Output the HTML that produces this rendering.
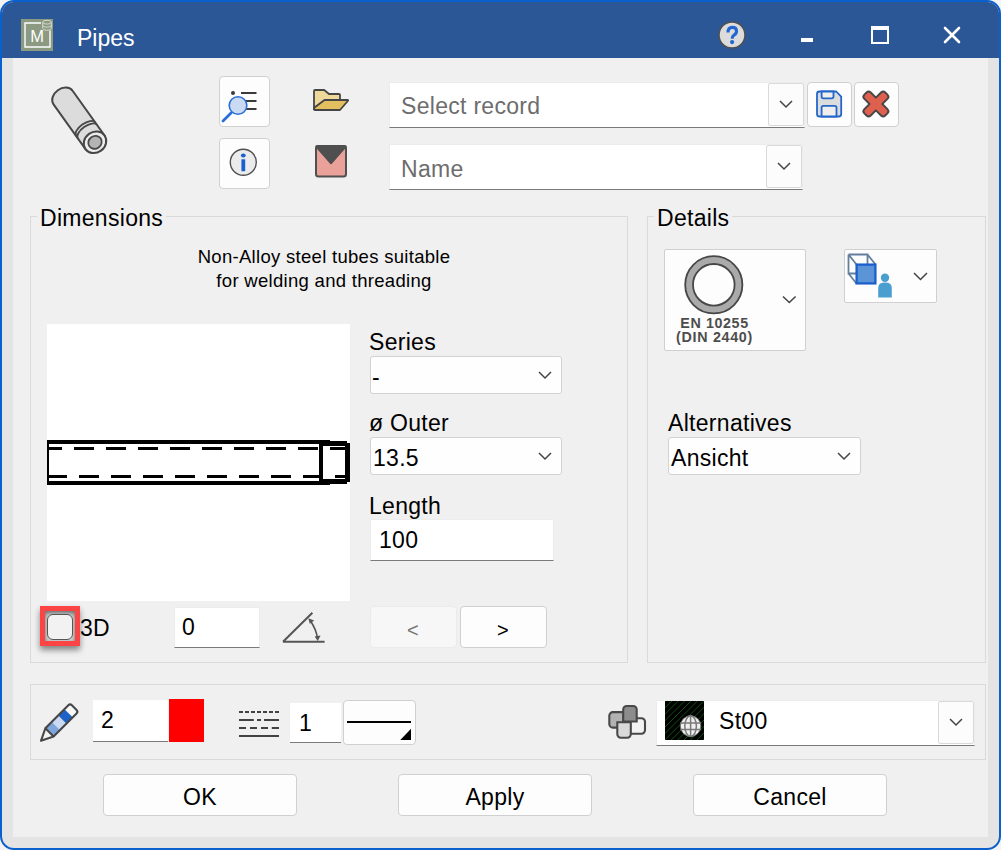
<!DOCTYPE html>
<html><head><meta charset="utf-8">
<style>
*{margin:0;padding:0;box-sizing:border-box}
html,body{width:1001px;height:850px;overflow:hidden;background:#f3f3f3}
body{position:relative;font-family:"Liberation Sans",sans-serif;color:#000}
.a{position:absolute}
.t{position:absolute;white-space:nowrap;line-height:1;font-size:23px;letter-spacing:0.3px}
#frame{position:absolute;left:0;top:0;width:1001px;height:850px;border:2px solid #0a60cc;border-radius:14px;background:#e4e4e4;overflow:hidden}
#title{position:absolute;left:0;top:0;width:1001px;height:58px;background:#2b5797}
#client{position:absolute;left:13px;top:58px;width:975px;height:779px;background:#f0f0f0}
.grp{position:absolute;border:1px solid #dadada}
.glab{position:absolute;background:#f0f0f0;line-height:1;font-size:23px;white-space:nowrap;letter-spacing:0.3px}
.btn{position:absolute;background:#fdfdfd;border:1px solid #d0d0d0;border-radius:4px}
.edit{position:absolute;background:#fff;border-bottom:1px solid #7a7a7a}
.combo{position:absolute;background:#fefefe;border:1px solid #d2d2d2;border-radius:3px}
svg{position:absolute;overflow:visible}
</style></head><body>
<div id="frame">
  <div id="title" style="left:-2px;top:-2px"></div>
</div>
<div id="client"></div>

<!-- title bar content -->
<svg style="left:21px;top:19px" width="32" height="32" viewBox="0 0 32 32">
  <rect x="0" y="0" width="32" height="32" fill="#8b9a81"/>
  <path d="M20 4 H4 V28 H29 V11.5" fill="none" stroke="#fff" stroke-width="1.4"/>
  <text x="9.3" y="22.6" font-family="Liberation Sans" font-size="16.5" fill="#fff">M</text>
  <g fill="none" stroke="#e3e8dc" stroke-width="0.8">
    <ellipse cx="26" cy="3.2" rx="4.3" ry="1.9"/>
    <path d="M21.7 3.2 V9.4 A4.3 1.9 0 0 0 30.3 9.4 V3.2 M21.7 6.3 A4.3 1.9 0 0 0 30.3 6.3"/>
  </g>
</svg>
<div class="t" style="left:77px;top:27px;color:#fff;font-size:23px;letter-spacing:0">Pipes</div>

<!-- help -->
<svg style="left:718px;top:21px" width="28" height="28" viewBox="0 0 28 28">
  <circle cx="14" cy="14" r="13" fill="#dcdcdc" stroke="#505050" stroke-width="1.5"/>
  <path d="M10 11.6 Q10 6.4 14.2 6.4 Q18.5 6.4 18.5 10.3 Q18.5 12.7 16 14.1 Q14.2 15.1 14.2 17.8" fill="none" stroke="#2266d0" stroke-width="3.1"/><circle cx="14.1" cy="21.1" r="2.1" fill="#2266d0"/>
</svg>
<div class="a" style="left:801px;top:38px;width:12px;height:4px;background:#fff"></div>
<div class="a" style="left:871px;top:26px;width:18px;height:18px;border:2px solid #fff;border-top-width:4px"></div>
<svg style="left:944px;top:27px" width="16" height="16" viewBox="0 0 16 16">
  <path d="M1 1 L15 15 M15 1 L1 15" stroke="#fff" stroke-width="2.6" stroke-linecap="round"/>
</svg>


<!-- pipe icon -->
<svg style="left:40px;top:75px" width="80" height="90" viewBox="0 0 80 90">
  <g transform="translate(55,67.3) rotate(54.5)">
    <path d="M-55 -11.7 H0 V11.7 H-55 A9 11.7 0 0 1 -55 -11.7 Z" fill="#dcdcdc" stroke="#474747" stroke-width="2"/>
    <path d="M-16.3 -11.7 A5.5 11.7 0 0 0 -16.3 11.7" fill="none" stroke="#474747" stroke-width="1.8"/>
    <path d="M-13.2 -11.7 A5.5 11.7 0 0 0 -13.2 11.7" fill="none" stroke="#474747" stroke-width="1.8"/>
    <ellipse cx="0" cy="0" rx="10.3" ry="11.7" fill="#ececec" stroke="#474747" stroke-width="2"/>
    <ellipse cx="0" cy="0" rx="6.3" ry="6.9" fill="#b4b4b4" stroke="#474747" stroke-width="1.8"/>
  </g>
</svg>

<!-- toolbar buttons -->
<div class="btn" style="left:219px;top:76px;width:51px;height:51px"></div>
<svg style="left:219px;top:76px" width="51" height="51" viewBox="0 0 51 51">
  <circle cx="14" cy="17" r="2" fill="#3a3a3a"/>
  <path d="M22 17 H37.5 M22 25 H37.5 M22 33 H37.5" stroke="#3a3a3a" stroke-width="2"/>
  <path d="M4 45 L12 37" stroke="#2a6fd6" stroke-width="2.8" stroke-linecap="round"/>
  <circle cx="19" cy="29.5" r="8.8" fill="#c9daf2" stroke="#2a6fd6" stroke-width="1.6"/>
</svg>
<div class="btn" style="left:219px;top:138px;width:51px;height:51px"></div>
<svg style="left:219px;top:138px" width="51" height="51" viewBox="0 0 51 51">
  <circle cx="24.3" cy="24.2" r="13" fill="#ebebeb" stroke="#505050" stroke-width="1.4"/>
  <ellipse cx="24.3" cy="17.4" rx="2.4" ry="2" fill="#1a5fd0"/>
  <rect x="22.4" y="21.3" width="3.8" height="12" rx="0.5" fill="#1a5fd0"/>
</svg>

<!-- folder -->
<svg style="left:300px;top:75px" width="60" height="45" viewBox="0 0 60 45">
  <path d="M14 35 V15 H24.2 L29 19 H40 V25 H24.5 L14 33 Z" fill="#efd99a"/>
  <path d="M14 35 V16 Q14 15 15 15 H24.2 L29 19 H39 Q40 19 40 20 V25" fill="none" stroke="#454545" stroke-width="1.8" stroke-linejoin="round"/>
  <path d="M14.5 32.5 L24.5 25 H47.5 Q48.6 25 47.8 26 L40 35 H15 Q14 35 14 34 Z" fill="#e3bf5f" stroke="#454545" stroke-width="1.8" stroke-linejoin="round"/>
</svg>
<!-- envelope -->
<svg style="left:300px;top:140px" width="60" height="45" viewBox="0 0 60 45">
  <rect x="16" y="6" width="30" height="30.5" rx="2.5" fill="#e9a19a" stroke="#4f4f4f" stroke-width="2"/>
  <path d="M16.5 6.5 H45.5 L31 23 Z" fill="#4f4f4f" stroke="#4f4f4f" stroke-width="2.4" stroke-linejoin="round"/>
</svg>

<!-- select record combo -->
<div class="a" style="left:389px;top:82px;width:416px;height:46px;background:#fff;border:1px solid #ececec;border-bottom:1px solid #7a7a7a"></div>
<div class="t" style="left:401px;top:95px;color:#6d6d6d">Select record</div>
<div class="a" style="left:768px;top:83px;width:36px;height:43px;background:#fcfcfc;border:1px solid #d9d9d9;border-radius:2px"></div>
<svg style="left:779px;top:100px" width="14" height="8" viewBox="0 0 14 8"><path d="M1 1 L7 7 L13 1" fill="none" stroke="#444" stroke-width="1.5"/></svg>

<div class="a" style="left:389px;top:144px;width:414px;height:46px;background:#fff;border:1px solid #ececec;border-bottom:1px solid #7a7a7a"></div>
<div class="t" style="left:401px;top:158px;color:#6d6d6d">Name</div>
<div class="a" style="left:766px;top:145px;width:36px;height:43px;background:#fcfcfc;border:1px solid #d9d9d9;border-radius:2px"></div>
<svg style="left:777px;top:162px" width="14" height="8" viewBox="0 0 14 8"><path d="M1 1 L7 7 L13 1" fill="none" stroke="#444" stroke-width="1.5"/></svg>

<!-- save -->
<div class="btn" style="left:807px;top:82px;width:45px;height:45px"></div>
<svg style="left:807px;top:82px" width="45" height="45" viewBox="0 0 45 45">
  <path d="M12.5 9.5 H29.2 L34.2 14.7 V32 Q34.2 34.5 31.7 34.5 H12.5 Q10 34.5 10 32 V12 Q10 9.5 12.5 9.5 Z" fill="#dcdcdc" stroke="#2266cc" stroke-width="1.8" stroke-linejoin="round"/>
  <path d="M14.6 9.5 V14.5 Q14.6 16.3 16.4 16.3 H24.7 Q26.5 16.3 26.5 14.5 V9.5 Z" fill="#eeeeee" stroke="#2266cc" stroke-width="1.8" stroke-linejoin="round"/>
  <path d="M14.6 34.5 V25.6 Q14.6 23.8 16.4 23.8 H27.7 Q29.5 23.8 29.5 25.6 V34.5 Z" fill="#eeeeee" stroke="#2266cc" stroke-width="1.8" stroke-linejoin="round"/>
</svg>
<!-- delete -->
<div class="btn" style="left:854px;top:82px;width:45px;height:45px"></div>
<svg style="left:854px;top:82px" width="45" height="45" viewBox="0 0 45 45">
  <path transform="translate(21.9,22) rotate(45)" d="M4.5 4.5 L11.80 4.50 Q14.80 4.50 14.80 1.50 L14.80 -1.50 Q14.80 -4.50 11.80 -4.50 L4.50 -4.50 L4.50 -11.80 Q4.50 -14.80 1.50 -14.80 L-1.50 -14.80 Q-4.50 -14.80 -4.50 -11.80 L-4.50 -4.50 L-11.80 -4.50 Q-14.80 -4.50 -14.80 -1.50 L-14.80 1.50 Q-14.80 4.50 -11.80 4.50 L-4.50 4.50 L-4.50 11.80 Q-4.50 14.80 -1.50 14.80 L1.50 14.80 Q4.50 14.80 4.50 11.80 L4.50 4.50 Z" fill="#e06050" stroke="#474747" stroke-width="1.9" stroke-linejoin="round"/>
</svg>


<!-- Dimensions group -->
<div class="grp" style="left:30px;top:216px;width:598px;height:447px"></div>
<div class="glab" style="left:37px;top:207px;padding:0 3px">Dimensions</div>
<div class="t" style="left:0;top:245px;width:648px;text-align:center;font-size:18.5px;line-height:24.3px;letter-spacing:0.3px">Non-Alloy steel tubes suitable<br>for welding and threading</div>

<!-- canvas -->
<div class="a" style="left:47px;top:324px;width:303px;height:277px;background:#fff"></div>
<svg style="left:47px;top:324px" width="303" height="277" viewBox="0 0 303 277" shape-rendering="crispEdges" fill="#000"><rect x="0" y="116" width="283" height="4"/><rect x="0" y="157" width="283" height="4"/><rect x="0" y="116" width="2" height="45"/><rect x="2" y="123" width="13" height="3"/><rect x="2" y="151" width="18" height="3"/><rect x="27" y="123" width="20" height="3"/><rect x="32" y="151" width="20" height="3"/><rect x="59" y="123" width="20" height="3"/><rect x="64" y="151" width="20" height="3"/><rect x="91" y="123" width="20" height="3"/><rect x="96" y="151" width="20" height="3"/><rect x="123" y="123" width="20" height="3"/><rect x="128" y="151" width="20" height="3"/><rect x="155" y="123" width="20" height="3"/><rect x="160" y="151" width="20" height="3"/><rect x="187" y="123" width="20" height="3"/><rect x="192" y="151" width="20" height="3"/><rect x="219" y="123" width="20" height="3"/><rect x="224" y="151" width="20" height="3"/><rect x="251" y="123" width="20" height="3"/><rect x="256" y="151" width="20" height="3"/><rect x="283" y="123" width="15" height="3"/><rect x="288" y="151" width="10" height="3"/><rect x="272" y="117" width="28" height="5"/><rect x="272" y="155" width="28" height="5"/><rect x="272" y="117" width="4" height="43"/><rect x="298" y="117" width="2" height="43"/><rect x="300" y="119" width="3" height="39"/></svg>


<!-- series / outer / length -->
<div class="t" style="left:369px;top:331px">Series</div>
<div class="combo" style="left:370px;top:356px;width:192px;height:38px"></div>
<div class="t" style="left:372px;top:366px">-</div>
<svg style="left:538px;top:371px" width="14" height="8" viewBox="0 0 14 8"><path d="M1 1 L7 7 L13 1" fill="none" stroke="#444" stroke-width="1.5"/></svg>

<div class="t" style="left:369px;top:412px">ø Outer</div>
<div class="combo" style="left:370px;top:437px;width:192px;height:38px"></div>
<div class="t" style="left:373px;top:447px">13.5</div>
<svg style="left:538px;top:452px" width="14" height="8" viewBox="0 0 14 8"><path d="M1 1 L7 7 L13 1" fill="none" stroke="#444" stroke-width="1.5"/></svg>

<div class="t" style="left:369px;top:495px">Length</div>
<div class="a" style="left:370px;top:519px;width:184px;height:42px;background:#fff;border:1px solid #ececec;border-bottom:1px solid #7a7a7a"></div>
<div class="t" style="left:379px;top:529px">100</div>

<!-- 3D checkbox with red highlight -->
<div class="a" style="left:40px;top:606px;width:40px;height:40px;border:5px solid #fc4444;box-shadow:0 4px 6px rgba(0,0,0,0.45);background:#d8d8d8"></div>
<div class="a" style="left:45px;top:611px;width:30px;height:30px;box-shadow:inset 0 2px 5px rgba(0,0,0,0.55)"></div>
<div class="a" style="left:47px;top:614px;width:26px;height:26px;border:1.8px solid #555;border-radius:6px;background:#f2f2f2"></div>
<div class="t" style="left:80px;top:617px">3D</div>

<!-- angle -->
<div class="a" style="left:174px;top:607px;width:86px;height:41px;background:#fff;border:1px solid #ececec;border-bottom:1px solid #7a7a7a"></div>
<div class="t" style="left:182px;top:616px">0</div>
<svg style="left:280px;top:610px" width="50" height="36" viewBox="0 0 50 36">
  <path d="M3 31.7 H44.6 M3 31.7 L32.4 2.8" fill="none" stroke="#555" stroke-width="2"/>
  <path d="M30.5 11 Q36 19 37.5 28" fill="none" stroke="#555" stroke-width="1.6"/>
  <path d="M28.3 8.3 L34.2 10.6 L29.8 13.8 Z" fill="#555"/>
  <path d="M34.6 26.6 L37.8 31 L40.6 25.6 Z" fill="#555"/>
</svg>

<!-- nav buttons -->
<div class="a" style="left:370px;top:606px;width:87px;height:42px;background:#f7f7f7;border:1px solid #ebebeb;border-radius:4px"></div>
<div class="a" style="left:460px;top:606px;width:87px;height:42px;background:#fdfdfd;border:1px solid #d0d0d0;border-radius:4px"></div>
<div class="t" style="left:407px;top:620px;color:#777;font-size:20px">&lt;</div>
<div class="t" style="left:497px;top:620px;font-size:20px">&gt;</div>


<!-- Details group -->
<div class="grp" style="left:647px;top:216px;width:339px;height:447px"></div>
<div class="glab" style="left:654px;top:207px;padding:0 3px">Details</div>

<div class="btn" style="left:664px;top:249px;width:142px;height:102px;border-radius:2px"></div>
<svg style="left:664px;top:249px" width="142" height="102" viewBox="0 0 142 102">
  <circle cx="49.8" cy="35.8" r="24.7" fill="none" stroke="#aaaaaa" stroke-width="8"/>
  <circle cx="49.8" cy="35.8" r="28.6" fill="none" stroke="#474747" stroke-width="1.8"/>
  <circle cx="49.8" cy="35.8" r="20.8" fill="none" stroke="#474747" stroke-width="1.8"/>
  <text x="50.5" y="78.6" font-family="Liberation Sans" font-weight="bold" font-size="14.3" letter-spacing="0.6" fill="#4d4d4d" text-anchor="middle">EN 10255</text>
  <text x="50.5" y="92.5" font-family="Liberation Sans" font-weight="bold" font-size="14.3" letter-spacing="0.7" fill="#4d4d4d" text-anchor="middle">(DIN 2440)</text>
  <path d="M119 47.5 L125.3 53.5 L131.6 47.5" fill="none" stroke="#444" stroke-width="1.5"/>
</svg>

<div class="btn" style="left:844px;top:249px;width:93px;height:54px;border-radius:2px"></div>
<svg style="left:844px;top:250px" width="93" height="53" viewBox="0 0 93 53">
  <path d="M4.5 4.5 H23.5 V14.5 M4.5 4.5 V23.5 H12.5 M4.5 4.5 L12.5 14.5 M23.5 4.5 L31.5 14.5 M4.5 23.5 L12.5 33.5" fill="none" stroke="#637f9c" stroke-width="1.8"/>
  <rect x="12.6" y="14.6" width="18.8" height="18.8" fill="#5b95d8" stroke="#1a5fcc" stroke-width="2.3"/>
  <circle cx="41" cy="27.8" r="4.2" fill="#4a9fd0"/>
  <path d="M34.2 47.6 V38 Q34.2 32.6 41 32.6 Q47.8 32.6 47.8 38 V47.6 Z" fill="#4a9fd0"/>
  <path d="M70 23 L76.5 29.5 L83 23" fill="none" stroke="#444" stroke-width="1.5"/>
</svg>

<div class="t" style="left:668px;top:412px">Alternatives</div>
<div class="combo" style="left:668px;top:437px;width:193px;height:38px"></div>
<div class="t" style="left:671px;top:447px">Ansicht</div>
<svg style="left:837px;top:452px" width="14" height="8" viewBox="0 0 14 8"><path d="M1 1 L7 7 L13 1" fill="none" stroke="#444" stroke-width="1.5"/></svg>

<!-- bottom panel -->
<div class="grp" style="left:30px;top:684px;width:956px;height:76px"></div>
<svg style="left:38px;top:700px" width="44" height="44" viewBox="0 0 44 44">
  <g transform="translate(19.95,23.85) rotate(45)">
    <rect x="-5.8" y="-23" width="11.6" height="8" fill="#f8f8f8"/>
    <rect x="-5.8" y="-15" width="11.6" height="9" fill="#1e62c8"/>
    <rect x="-5.8" y="-6" width="11.6" height="9" fill="#c9daf2"/>
    <rect x="-5.8" y="3" width="11.6" height="9" fill="#7fa6dc"/>
    <path d="M-5.8 12 V-20.5 Q-5.8 -23 -3.3 -23 H3.3 Q5.8 -23 5.8 -20.5 V12" fill="none" stroke="#474747" stroke-width="2.1" stroke-linejoin="round"/>
    <path d="M-5.8 12 L0 24 L5.8 12 Z" fill="#f2f2f2" stroke="#474747" stroke-width="2.1" stroke-linejoin="round"/>
  </g>
</svg>
<div class="a" style="left:93px;top:700px;width:75px;height:42px;background:#fff;border-bottom:1px solid #7a7a7a"></div>
<div class="t" style="left:101px;top:709px">2</div>
<div class="a" style="left:169px;top:699px;width:35px;height:43px;background:#ff0000"></div>

<svg style="left:235px;top:705px" width="50" height="36" viewBox="0 0 50 36">
  <g stroke="#424242" stroke-width="2">
  <path d="M4 7 H8 M10 7 H14 M16 7 H20 M22 7 H26 M28 7 H32 M34 7 H38 M40 7 H44"/>
  <path d="M4 15 H18.8 M22 15 H26 M29 15 H44"/>
  <path d="M4 23 H11 M15 23 H22 M26 23 H33 M36.8 23 H44"/>
  <path d="M4 31 H44"/>
  </g>
</svg>
<div class="a" style="left:290px;top:703px;width:51px;height:40px;background:#fff;border-bottom:1px solid #7a7a7a"></div>
<div class="t" style="left:299px;top:712px">1</div>
<div class="btn" style="left:343px;top:700px;width:73px;height:45px;border-radius:4px"></div>
<svg style="left:343px;top:700px" width="73" height="45" viewBox="0 0 73 45">
  <path d="M4 22 H68" stroke="#000" stroke-width="2"/>
  <path d="M57.3 40 H68 V28.8 Z" fill="#000"/>
</svg>

<svg style="left:600px;top:700px" width="56" height="44" viewBox="0 0 56 44">
  <g stroke="#484848" stroke-width="2.1">
  <path d="M12.9 12.1 H23.5 V27.6 H12.9 A3.6 3.6 0 0 1 9.3 24.0 V15.7 A3.6 3.6 0 0 1 12.9 12.1 Z" fill="#b2b2b2"/>
  <path d="M30 18.2 H41.4 A3.6 3.6 0 0 1 45 21.8 V30.1 A3.6 3.6 0 0 1 41.4 33.7 H30 V18.2 Z" fill="#f2f2f2"/>
  <path d="M26.8 6 H33.1 A3.6 3.6 0 0 1 36.7 9.6 V21.5 H23.2 V9.6 A3.6 3.6 0 0 1 26.8 6 Z" fill="#8c8c8c"/>
  <path d="M17.3 22.3 H30.8 V34.1 A3.6 3.6 0 0 1 27.2 37.7 H20.900000000000002 A3.6 3.6 0 0 1 17.3 34.1 V22.3 Z" fill="#d9d9d9"/>
  </g>
</svg>
<div class="a" style="left:656px;top:700px;width:319px;height:46px;background:#fff;border:1px solid #ececec;border-bottom:1px solid #7a7a7a"></div>
<svg style="left:665px;top:701px" width="39" height="39" viewBox="0 0 39 39">
  <defs><clipPath id="sw"><rect x="0" y="0" width="39" height="39"/></clipPath></defs>
  <rect x="0" y="0" width="39" height="39" fill="#000"/>
  <g clip-path="url(#sw)" stroke="#136f13" stroke-width="0.75">
    <path d="M-45.0 39 L-5.0 -1 M-38.6 39 L1.4 -1 M-32.2 39 L7.8 -1 M-25.8 39 L14.2 -1 M-19.4 39 L20.6 -1 M-13.0 39 L27.0 -1 M-6.6 39 L33.4 -1 M-0.2 39 L39.8 -1 M6.2 39 L46.2 -1 M12.6 39 L52.6 -1 M19.0 39 L59.0 -1 M25.4 39 L65.4 -1 M31.8 39 L71.8 -1 M38.2 39 L78.2 -1"/>
  </g>
  <circle cx="25.6" cy="25.1" r="10.3" fill="#efefef" stroke="#6a6a6a" stroke-width="0.9"/>
  <g stroke="#7a7a7a" stroke-width="1.5" fill="none">
    <path d="M15.3 21.9 H35.9 M15.3 28.4 H35.9"/>
    <ellipse cx="25.6" cy="25.1" rx="5.8" ry="10.3"/>
    <path d="M25.6 14.8 V35.4"/>
  </g>
</svg>
<div class="t" style="left:719px;top:710px">St00</div>
<div class="a" style="left:938px;top:701px;width:36px;height:43px;background:#fcfcfc;border:1px solid #d9d9d9;border-radius:2px"></div>
<svg style="left:949px;top:718px" width="14" height="8" viewBox="0 0 14 8"><path d="M1 1 L7 7 L13 1" fill="none" stroke="#444" stroke-width="1.5"/></svg>

<!-- dialog buttons -->
<div class="btn" style="left:103px;top:774px;width:194px;height:42px"></div>
<div class="t" style="left:103px;top:786px;width:194px;text-align:center">OK</div>
<div class="btn" style="left:398px;top:774px;width:194px;height:42px"></div>
<div class="t" style="left:398px;top:786px;width:194px;text-align:center">Apply</div>
<div class="btn" style="left:693px;top:774px;width:194px;height:42px"></div>
<div class="t" style="left:693px;top:786px;width:194px;text-align:center">Cancel</div>

</body></html>
